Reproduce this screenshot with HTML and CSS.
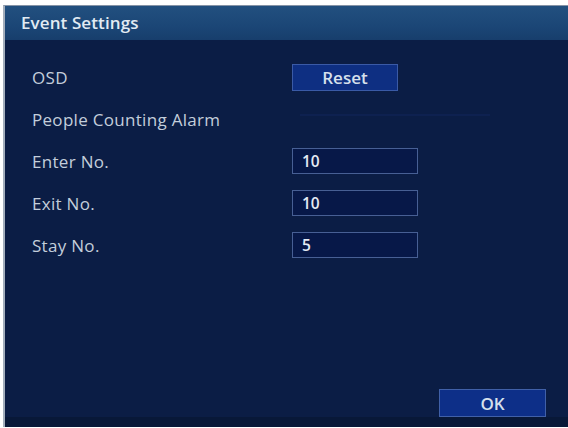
FILE: index.html
```html
<!DOCTYPE html>
<html>
<head>
<meta charset="utf-8">
<link rel="stylesheet" href="styles.css">
</head>
<body>
<div class="window">
  <div class="header">Event Settings</div>
  <div class="content">
    <div class="row">
      <span class="label">OSD</span>
      <button class="btn btn-reset">Reset</button>
    </div>
    <div class="row">
      <span class="label">People Counting Alarm</span>
      <span class="faint"></span>
    </div>
    <div class="row">
      <span class="label">Enter No.</span>
      <span class="field">10</span>
    </div>
    <div class="row">
      <span class="label">Exit No.</span>
      <span class="field">10</span>
    </div>
    <div class="row">
      <span class="label">Stay No.</span>
      <span class="field">5</span>
    </div>
  </div>
  <div class="footer">
    <button class="btn btn-ok">OK</button>
  </div>
  <div class="bottom-strip"></div>
</div>
</body>
</html>
```
FILE: styles.css
```css
html, body {
  margin: 0;
  padding: 0;
  background: #ffffff;
}
body {
  width: 568px;
  height: 428px;
  overflow: hidden;
  font-family: "Open Sans", "Noto Sans", sans-serif;
}
.window {
  margin: 5px 0 0 3px;
  height: 422px;
  border-top: 1px solid #8593a6;
  border-left: 2px solid #a3aebc;
  background: #0b1d45;
  display: flex;
  flex-direction: column;
  box-sizing: border-box;
}
.header {
  height: 34px;
  flex: none;
  background: linear-gradient(180deg, #22507f 0%, #1b4676 60%, #173e6c 100%);
  color: #e2ebf3;
  font-size: 17px;
  font-weight: 600;
  line-height: 34px;
  padding-left: 16px;
  letter-spacing: 0.1px;
}
.content {
  flex: 1;
  padding: 16px 0 0 27px;
  display: flex;
  flex-direction: column;
}
.row {
  height: 42px;
  display: grid;
  grid-template-columns: 260px auto;
  align-items: center;
}
.label {
  color: #c3cedb;
  font-size: 17px;
  letter-spacing: 0.3px;
}
.btn {
  font-family: "Open Sans", "Noto Sans", sans-serif;
  color: #d6e0ec;
  font-size: 17px;
  font-weight: 600;
  background: #0e2f82;
  border: 1px solid #3a5aa6;
  padding: 0;
  margin: 0;
}
.btn-reset {
  width: 106px;
  height: 27px;
}
.faint {
  display: block;
  width: 190px;
  height: 2px;
  margin-left: 8px;
  margin-top: -8px;
  background: #0e2150;
}
.field {
  display: block;
  box-sizing: border-box;
  width: 126px;
  height: 26px;
  border: 1px solid #475f94;
  background: #071848;
  color: #e4ebf4;
  font-size: 15.5px;
  font-weight: 600;
  line-height: 24px;
  padding-left: 9px;
}
.footer {
  flex: none;
  display: flex;
  justify-content: flex-end;
  padding-right: 22px;
}
.btn-ok {
  width: 107px;
  height: 28px;
  background: #0d2f88;
  border-color: #4060a8;
}
.bottom-strip {
  flex: none;
  height: 10px;
  background: #081838;
}
```
